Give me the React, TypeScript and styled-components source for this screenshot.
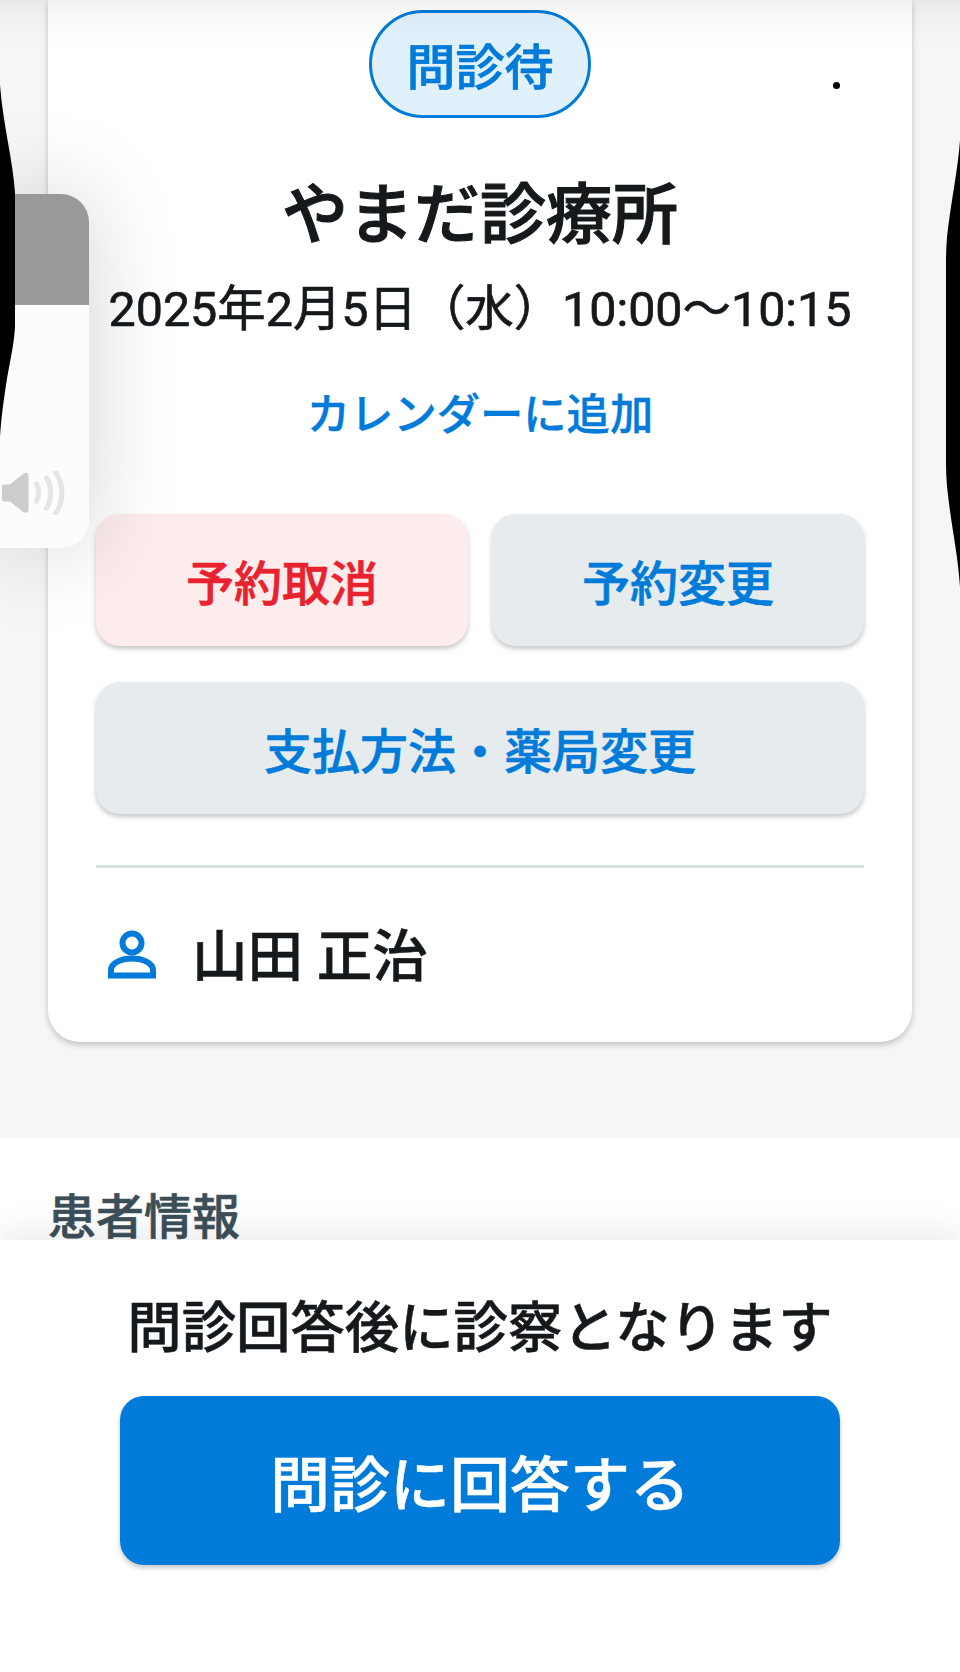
import styled, { createGlobalStyle } from "styled-components";

const GlobalStyle = createGlobalStyle`
  html, body {
    margin: 0;
    padding: 0;
    background: #f5f6f8;
  }
  * {
    box-sizing: border-box;
  }
`;

const blue = "#007bd9";
const ink = "#15191c";

const Page = styled.div`
  position: relative;
  width: 960px;
  height: 1672px;
  overflow: hidden;
  display: flex;
  flex-direction: column;
  background: #f5f6f8;
  font-family: Roboto, "Noto Sans CJK JP", sans-serif;
  color: ${ink};
`;

const Main = styled.main`
  padding: 0 48px 96px;
`;

const Card = styled.section`
  position: relative;
  display: flex;
  flex-direction: column;
  align-items: center;
  height: 1042px;
  padding: 10px 48px 0;
  background: #fff;
  border-radius: 0 0 32px 32px;
  box-shadow: 0 3px 6px rgba(0, 0, 0, 0.22);
`;

const StatusBadge = styled.div`
  display: flex;
  align-items: center;
  justify-content: center;
  width: 222px;
  height: 108px;
  padding-bottom: 2px;
  border: 3px solid ${blue};
  border-radius: 54px;
  background: #e1f1fb;
  color: ${blue};
  font-size: 49px;
  font-weight: 500;
  -webkit-text-stroke: 0.7px ${blue};
`;

const Dot = styled.span`
  position: absolute;
  left: 785px;
  top: 82px;
  width: 7px;
  height: 7px;
  border-radius: 50%;
  background: #000;
`;

const ClinicName = styled.h1`
  margin: 52px 0 0;
  font-size: 66px;
  line-height: 92px;
  font-weight: 500;
  -webkit-text-stroke: 1.1px ${ink};
`;

const DateLine = styled.p`
  margin: 13px 0 0;
  font-size: 48.4px;
  line-height: 70px;
  font-weight: 400;
  white-space: nowrap;
  -webkit-text-stroke: 0.7px ${ink};
`;

const CalendarLink = styled.a`
  margin-top: 41px;
  color: ${blue};
  font-size: 43.3px;
  line-height: 60px;
  font-weight: 500;
  -webkit-text-stroke: 0.4px ${blue};
`;

const Actions = styled.div`
  display: grid;
  grid-template-columns: 1fr 1fr;
  gap: 36px 24px;
  align-self: stretch;
  margin-top: 68px;
`;

const ActionButton = styled.button<{ $danger?: boolean; $wide?: boolean }>`
  grid-column: ${({ $wide }) => ($wide ? "1 / -1" : "auto")};
  height: 132px;
  border: none;
  border-radius: 24px;
  background: ${({ $danger }) => ($danger ? "#fdecec" : "#e6ebee")};
  color: ${({ $danger }) => ($danger ? "#e8222e" : blue)};
  font-family: inherit;
  font-size: 48px;
  font-weight: 500;
  -webkit-text-stroke: 0.6px ${({ $danger }) => ($danger ? "#e8222e" : blue)};
  box-shadow: 0 3px 5px rgba(0, 0, 0, 0.22);
`;

const Divider = styled.hr`
  align-self: stretch;
  height: 3px;
  margin: 51px 0 0;
  border: none;
  background: #d8dfe3;
`;

const PatientRow = styled.div`
  display: flex;
  align-self: stretch;
  align-items: center;
  gap: 36px;
  height: 66px;
  margin-top: 51px;
  padding-left: 12px;
  font-size: 55.5px;
  font-weight: 500;
  -webkit-text-stroke: 0.5px ${ink};
`;

const PersonGlyph = styled.svg`
  margin-top: 4px;
`;

const PatientSection = styled.section`
  height: 102px;
  overflow: hidden;
  padding: 52px 48px 0;
  background: #fff;
`;

const SectionTitle = styled.h2`
  margin: 0;
  color: #3c4f59;
  font-size: 48px;
  line-height: 56px;
  font-weight: 500;
  -webkit-text-stroke: 0.6px #3c4f59;
`;

const Footer = styled.footer`
  position: relative;
  flex: 1;
  display: flex;
  flex-direction: column;
  align-items: center;
  padding-top: 54px;
  background: #fff;
  box-shadow: 0 -12px 30px rgba(0, 0, 0, 0.07);
`;

const Notice = styled.p`
  margin: 0;
  font-size: 54.4px;
  line-height: 70px;
  font-weight: 500;
  -webkit-text-stroke: 0.5px ${ink};
`;

const AnswerButton = styled.button`
  width: 720px;
  height: 169px;
  margin-top: 32px;
  border: none;
  border-radius: 24px;
  background: ${blue};
  color: #fff;
  font-family: inherit;
  font-size: 60px;
  font-weight: 500;
  -webkit-text-stroke: 0.5px #fff;
  box-shadow: 0 3px 5px rgba(0, 0, 0, 0.22);
`;

// shade the status bar throws over the top of the page
const TopShade = styled.div`
  position: absolute;
  inset: 0 0 auto;
  height: 50px;
  background: linear-gradient(
    rgba(0, 0, 0, 0.06),
    rgba(0, 0, 0, 0.025) 16px,
    rgba(0, 0, 0, 0.008) 34px,
    rgba(0, 0, 0, 0)
  );
  pointer-events: none;
`;

const VolumeShadow = styled.div`
  position: absolute;
  left: 0;
  top: 194px;
  width: 89px;
  height: 354px;
  border-radius: 0 28px 28px 0;
  box-shadow: 0 0 90px rgba(0, 0, 0, 0.18);
`;

const VolumePanel = styled.div`
  position: absolute;
  left: 0;
  top: 194px;
  width: 89px;
  height: 354px;
  display: flex;
  flex-direction: column;
  overflow: hidden;
  border-radius: 0 28px 28px 0;
`;

const VolumeLevel = styled.div`
  height: 111px;
  background: #999999;
`;

const VolumeTrack = styled.div`
  flex: 1;
  display: flex;
  align-items: flex-end;
  padding: 0 0 33px 1px;
  background: #fcfcfd;
`;

const ScreenEdge = styled.svg<{ $side: "left" | "right" }>`
  position: absolute;
  top: 0;
  ${({ $side }) => ($side === "left" ? "left: 0;" : "right: 0;")}
`;

const SpeakerIcon = () => (
  <svg width="64" height="44" viewBox="0 0 64 44">
    <path
      d="M2 13.5 C1.2 13.5 1 14.5 1 15.5 V28 C1 29.5 1.8 30.5 3 30.5 H9 L22 41 C24.5 42.5 27.5 42 27.5 38.5 V5 C27.5 1.5 24.5 1 22 3 L9 13.5 Z"
      fill="#cbcccd"
    />
    <g fill="none" stroke="#e4e5e6" strokeWidth="5" strokeLinecap="round">
      <path d="M35.5 13 C38.5 18 38.5 25 35.5 30" />
      <path d="M45.5 7 C51 15 51 29 45.5 37" />
      <path d="M54.5 1.5 C63 13 63 31 54.5 42.5" />
    </g>
  </svg>
);

const PersonIcon = () => (
  <PersonGlyph width="48" height="50" viewBox="0 0 48 50" fill="none" stroke={blue} strokeWidth="6">
    <circle cx="24" cy="14" r="9.5" />
    <path d="M3 46.5 V41 C3 34 13.5 29.5 24 29.5 C34.5 29.5 45 34 45 41 V46.5 Z" />
  </PersonGlyph>
);

const App = () => {
  return (
    <Page>
      <GlobalStyle />
      <Main>
        <Card>
          <StatusBadge>問診待</StatusBadge>
          <Dot />
          <ClinicName>やまだ診療所</ClinicName>
          <DateLine>2025年2月5日（水）10:00〜10:15</DateLine>
          <CalendarLink>カレンダーに追加</CalendarLink>
          <Actions>
            <ActionButton $danger>予約取消</ActionButton>
            <ActionButton>予約変更</ActionButton>
            <ActionButton $wide>支払方法・薬局変更</ActionButton>
          </Actions>
          <Divider />
          <PatientRow>
            <PersonIcon />
            山田 正治
          </PatientRow>
        </Card>
      </Main>
      <PatientSection>
        <SectionTitle>患者情報</SectionTitle>
      </PatientSection>
      <Footer>
        <Notice>問診回答後に診察となります</Notice>
        <AnswerButton>問診に回答する</AnswerButton>
      </Footer>
      <TopShade />
      <VolumeShadow />
      <VolumePanel>
        <VolumeLevel />
        <VolumeTrack>
          <SpeakerIcon />
        </VolumeTrack>
      </VolumePanel>
      <ScreenEdge $side="left" width="16" height="440" viewBox="0 0 16 440">
        <path d="M0 85 C3 125 13 160 15 193 V327 C14 345 10 360 6 385 C3 405 1 420 0 437 Z" fill="#000" />
      </ScreenEdge>
      <ScreenEdge $side="right" width="14" height="590" viewBox="0 0 14 590">
        <path d="M14 140 C12 170 5 200 1 237 Q0 250 0 262 V462 Q0 480 2 495 C6 530 12 555 14 587 Z" fill="#000" />
      </ScreenEdge>
    </Page>
  );
};

export default App;
